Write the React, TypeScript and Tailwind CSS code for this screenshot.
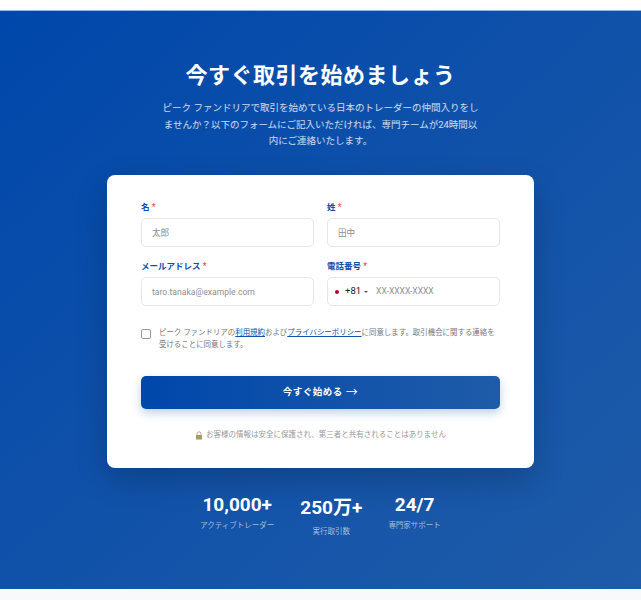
const font = "font-['Roboto','Noto_Sans_CJK_JP',sans-serif]"

function Label({ text }: { text: string }) {
  return (
    <label className="block text-[8.5px] leading-[14px] font-semibold text-[#0f4fa8] mb-[4px]">
      {text} <span className="text-[#e25555]">*</span>
    </label>
  )
}

function Field({ label, placeholder }: { label: string; placeholder: string }) {
  return (
    <div>
      <Label text={label} />
      <input
        readOnly
        placeholder={placeholder}
        className="w-full h-[29px] px-[10px] rounded-[5px] border-[1.5px] border-[#e5e7eb] bg-white text-[8.6px] outline-none placeholder:text-[#8f8f8f]"
      />
    </div>
  )
}

function Stat({ value, label, tall }: { value: string; label: string; tall?: boolean }) {
  return (
    <div className="text-center">
      <div className={`text-[19px] font-bold text-white ${tall ? 'leading-[28px]' : 'leading-[22px]'}`}>{value}</div>
      <div className="text-[7.5px] leading-[11px] text-white/60 mt-[3.5px]">{label}</div>
    </div>
  )
}

export default function App() {
  return (
    <div className={`${font} min-h-[600px] bg-[#f8f9fa]`}>
      <div className="h-[10px] bg-white" />
      <section className="h-[579px] border-t border-[#8fb4e8] bg-gradient-to-br from-[#0047ab] to-[#1e5ba8] pt-[46px] flex flex-col items-center">
        <h1 className="text-[22px] leading-[38px] font-bold text-white tracking-[0.5px]">今すぐ取引を始めましょう</h1>
        <p className="w-[320px] mt-[5px] text-center text-[9.5px] leading-[16.5px] text-white/80">
          ピーク ファンドリアで取引を始めている日本のトレーダーの仲間入りをしませんか？以下のフォームにご記入いただければ、専門チームが24時間以内にご連絡いたします。
        </p>

        <div className="w-[427px] h-[293px] mt-[25.5px] shrink-0 bg-white rounded-[8px] px-[34px] pt-[25px] shadow-[0_12px_32px_rgba(0,0,0,0.2)]">
          <div className="grid grid-cols-2 gap-x-[13px] gap-y-[12px]">
            <Field label="名" placeholder="太郎" />
            <Field label="姓" placeholder="田中" />
            <Field label="メールアドレス" placeholder="taro.tanaka@example.com" />
            <div>
              <Label text="電話番号" />
              <div className="h-[29px] rounded-[5px] border-[1.5px] border-[#e5e7eb] flex items-center pl-[4px]">
                <span className="w-[10px] h-[8px] bg-white flex items-center justify-center">
                  <span className="w-[4px] h-[4px] rounded-full bg-[#bc002d]" />
                </span>
                <span className="ml-[3px] text-[9.5px] text-[#222]">+81</span>
                <span className="ml-[3px] w-0 h-0 border-x-[2px] border-x-transparent border-t-[2px] border-t-[#555]" />
                <span className="ml-[8px] text-[8.5px] text-[#8f8f8f]">XX-XXXX-XXXX</span>
              </div>
            </div>
          </div>

          <div className="flex mt-[20px]">
            <span className="w-[10px] h-[10px] mt-[3px] shrink-0 rounded-[2px] border border-[#999] bg-white" />
            <p className="ml-[8px] pt-[1px] text-[7.45px] leading-[11.5px] text-[#777]">
              ピーク ファンドリアの<a className="text-[#0f4fa8] underline">利用規約</a>および<a className="text-[#0f4fa8] underline">プライバシーポリシー</a>に同意します。取引機会に関する連絡を受けることに同意します。
            </p>
          </div>

          <button className="w-full h-[33px] mt-[26px] rounded-[5px] bg-gradient-to-r from-[#0047ab] to-[#1e5ba8] text-white text-[9.5px] font-semibold tracking-[0.5px] flex items-center justify-center shadow-[0_4px_10px_rgba(0,71,171,0.25)]">
            今すぐ始める
            <span className="ml-[3px] text-[12px] font-normal leading-none">→</span>
          </button>

          <p className="mt-[20px] text-center text-[7.5px] leading-[12px] text-[#999] flex items-center justify-center gap-[3px]">
            <svg width="8" height="9" viewBox="0 0 8 9">
              <path d="M2 4V2.8a2 2 0 0 1 4 0V4" fill="none" stroke="#b0a58c" strokeWidth="0.9" />
              <rect x="1" y="4" width="6" height="4.6" rx="0.6" fill="#a89a5c" />
            </svg>
            お客様の情報は安全に保護され、第三者と共有されることはありません
          </p>
        </div>

        <div className="flex items-start gap-[26px] mt-[26px]">
          <Stat value="10,000+" label="アクティブトレーダー" />
          <Stat value="250万+" label="実行取引数" tall />
          <Stat value="24/7" label="専門家サポート" />
        </div>
      </section>
    </div>
  )
}
